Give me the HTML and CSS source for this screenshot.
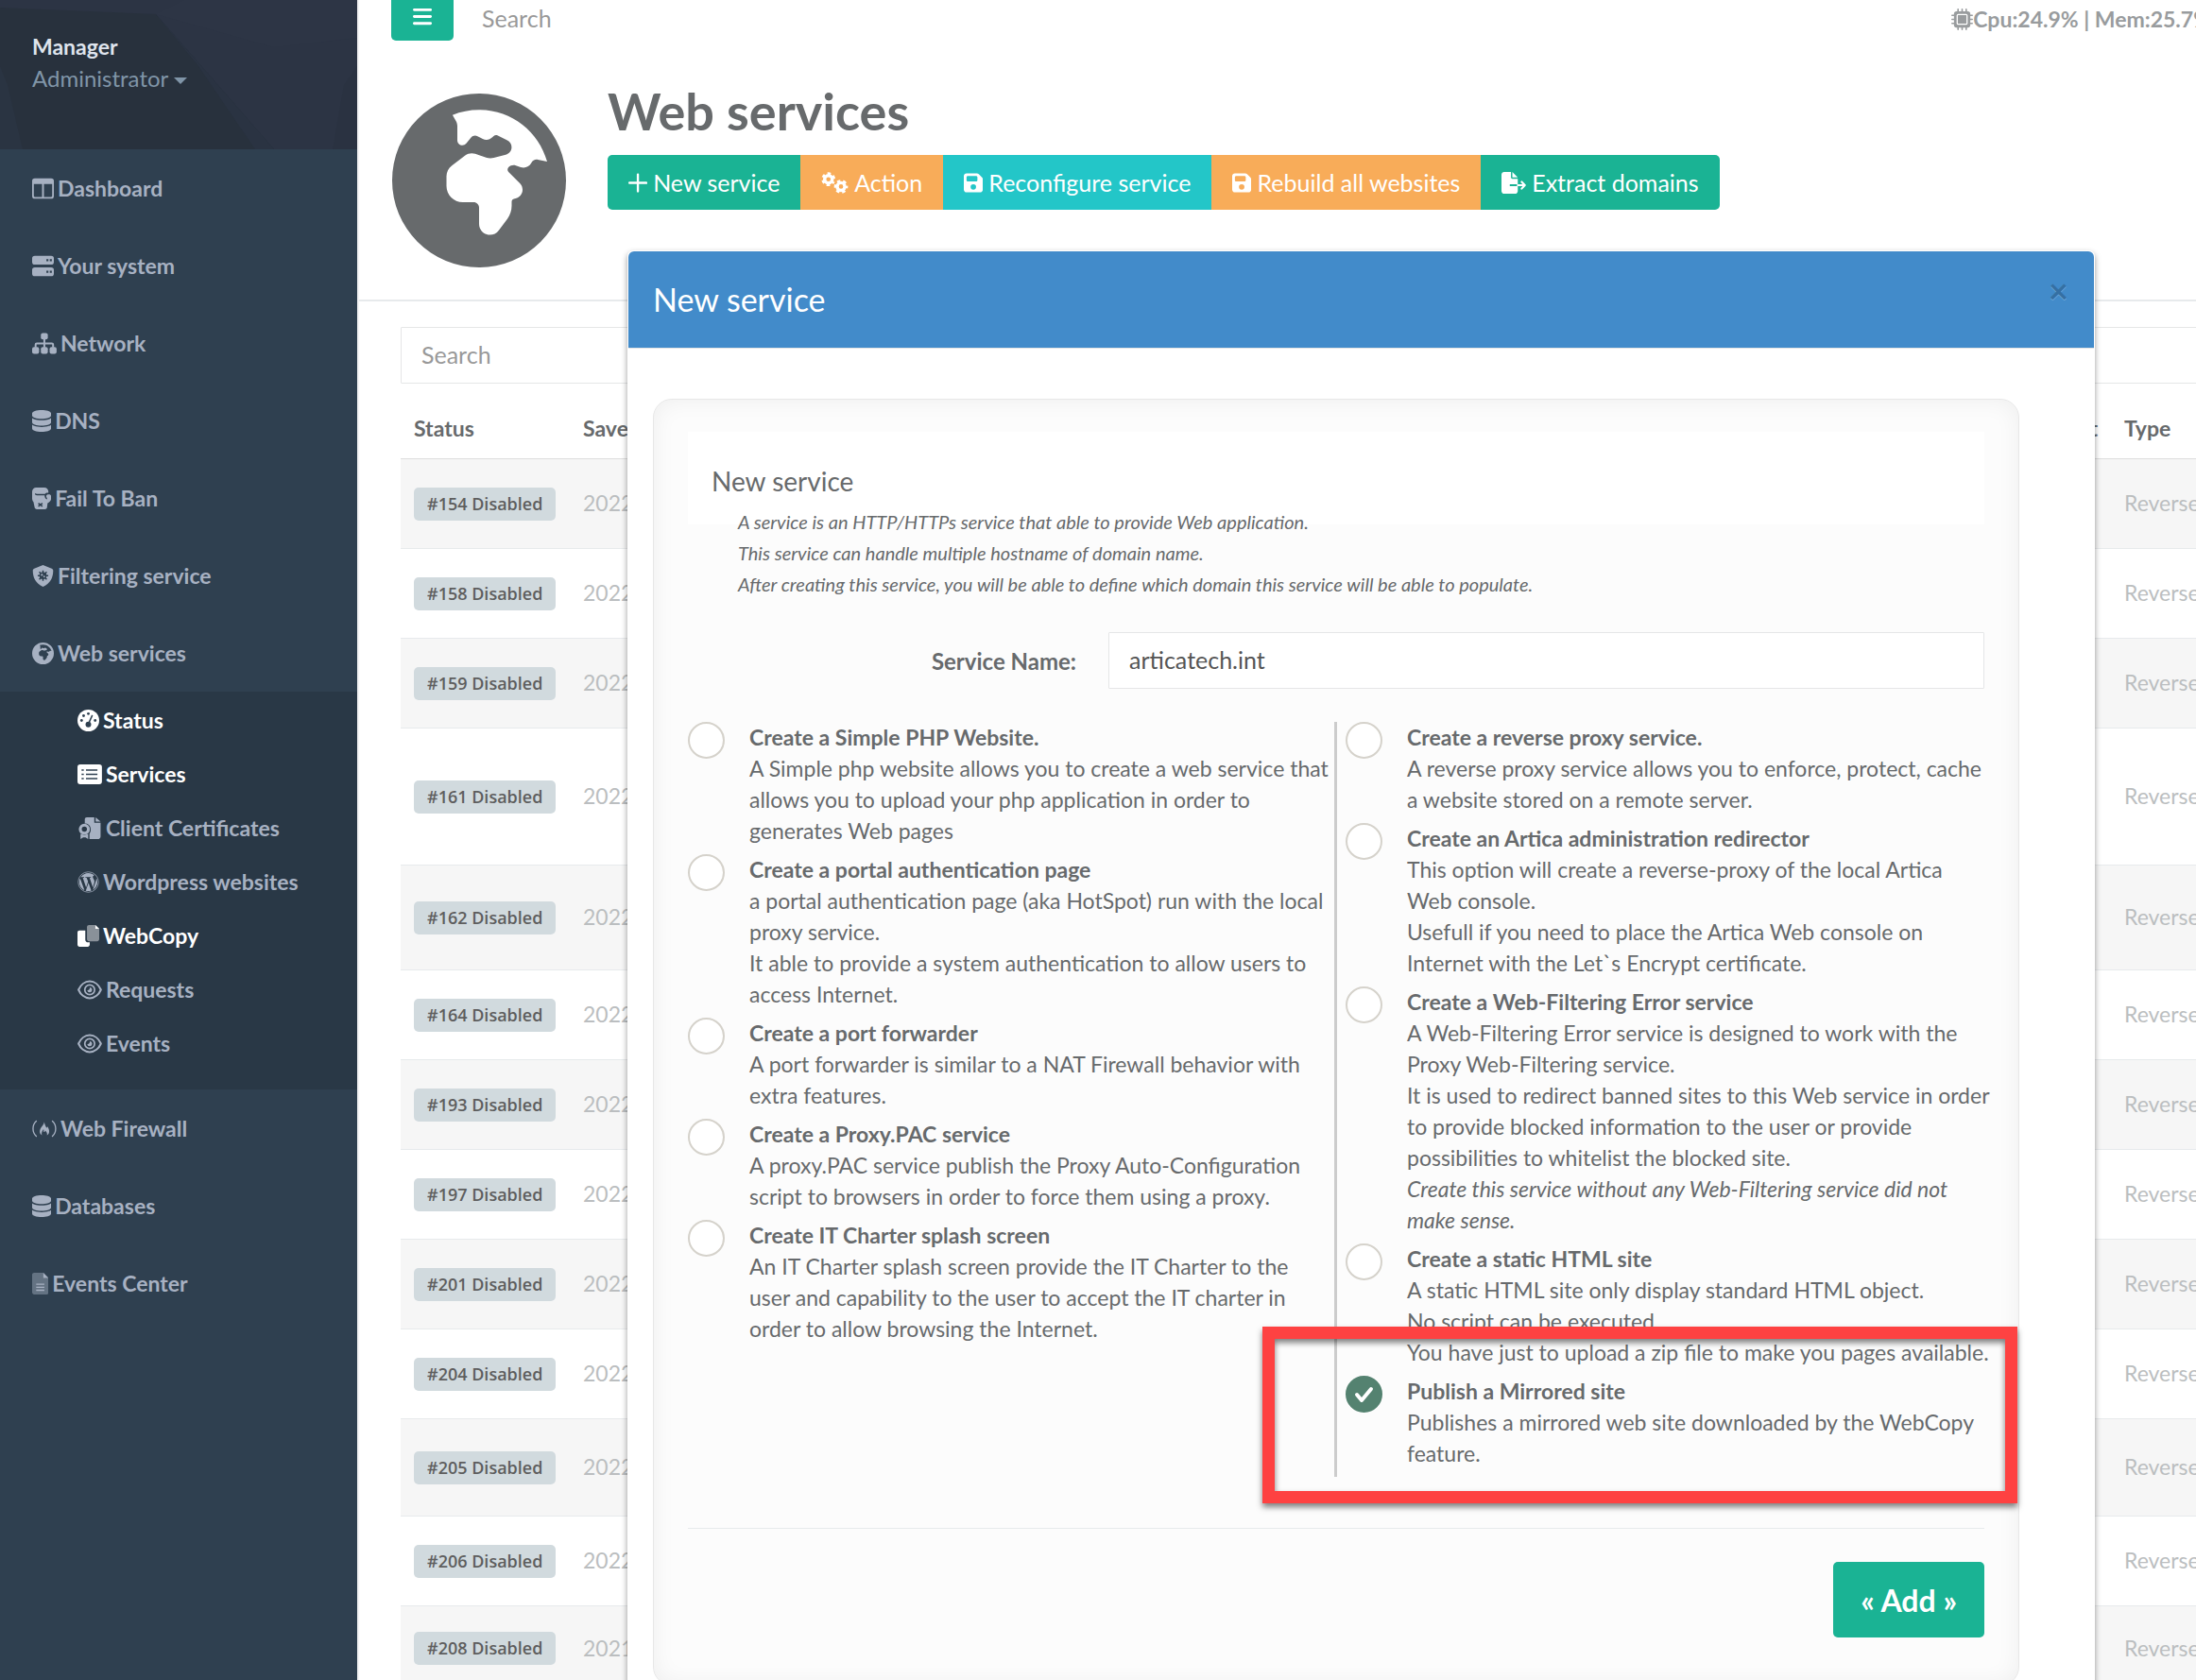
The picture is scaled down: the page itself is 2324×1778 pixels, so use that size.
FILE: index.html
```html
<!DOCTYPE html>
<html lang="en">
<head>
    <meta charset="UTF-8">
    <meta name="viewport" content="width=device-width, initial-scale=1.0">
    <title>Web services</title>
    <link rel="stylesheet" href="styles.css">
</head>
<body>

<!-- Shared icons -->
<svg class="sprite" aria-hidden="true">
    <symbol id="i-globe" viewBox="0 0 512 512"><path fill-rule="evenodd" d="M177.8 63.2l10 17.4c2.800 4.800 4.200 10.300 4.200 15.900v41.400c0 3.900 1.600 7.700 4.300 10.400c6.200 6.200 16.500 5.700 22-1.200l13.600-17c4.700-5.900 12.900-7.700 19.600-4.300l15.200 7.600c3.400 1.700 7.200 2.600 11 2.600c6.500 0 12.800-2.600 17.400-7.200l3.900-3.900c2.900-2.900 7.300-3.600 11-1.800l29.200 14.600c7.800 3.900 12.600 11.800 12.600 20.500c0 10.500-7.100 19.600-17.300 22.200l-35.400 8.800c-7.400 1.800-15.100 1.500-22.400-.9l-32-10.700c-3.300-1.100-6.700-1.700-10.200-1.700c-7 0-13.800 2.300-19.400 6.500L176 212c-10.100 7.600-16 19.400-16 32v28c0 26.500 21.500 48 48 48h32c8.800 0 16 7.200 16 16v48c0 17.700 14.300 32 32 32c10.100 0 19.600-4.700 25.600-12.800l25.600-34.100c8.300-11.100 12.800-24.600 12.800-38.400V318.600c0-3.900 2.600-7.300 6.400-8.200l5.300-1.300c11.900-3 20.300-13.700 20.300-26c0-7.100-2.800-13.900-7.800-18.900l-33.500-33.500c-3.700-3.700-3.700-9.700 0-13.400c5.700-5.700 14.100-7.700 21.800-5.100l14.100 4.700c12.300 4.100 25.700-1.500 31.500-13c3.500-7 11.200-10.800 18.900-9.200l27.400 5.500C432 112.400 351.500 48 256 48c-27.700 0-54 5.400-78.200 15.200zM0 256a256 256 0 1 1 512 0A256 256 0 1 1 0 256z"/></symbol>
    <symbol id="i-database" viewBox="0 0 448 512"><path d="M448 80v48c0 44-100 80-224 80S0 172 0 128V80C0 36 100 0 224 0s224 36 224 80zM393 215c21-8 40-17 55-28v101c0 44-100 80-224 80S0 332 0 288V187c15 11 34 20 55 28 45 16 105 25 169 25s124-9 169-25zM0 347c15 11 34 20 55 28 45 16 105 25 169 25s124-9 169-25c21-8 40-17 55-28v85c0 44-100 80-224 80S0 476 0 432z"/></symbol>
    <symbol id="i-eye" viewBox="0 0 576 512"><path fill="none" stroke="currentColor" stroke-width="46" stroke-linejoin="round" d="M24 256C70 148 170 56 288 56s218 92 264 200c-46 108-146 200-264 200S70 364 24 256z"/><circle cx="288" cy="256" r="116" fill="none" stroke="currentColor" stroke-width="38"/><path d="M290 200a58 58 0 1 1-60 66c30 8 60-10 60-66z"/></symbol>
    <symbol id="i-save" viewBox="0 0 448 512"><path fill-rule="evenodd" d="M64 32C29 32 0 61 0 96v320c0 35 29 64 64 64h320c35 0 64-29 64-64V173c0-17-7-33-19-45l-77-77c-12-12-28-19-45-19zm0 96c0-18 14-32 32-32h192c18 0 32 14 32 32v64c0 18-14 32-32 32H96c-18 0-32-14-32-32zm160 160a64 64 0 1 1 0 128 64 64 0 1 1 0-128z"/></symbol>
</svg>

<div class="wrapper">
    <nav class="sidebar">
        <div class="profile">
            <svg class="profile_pattern" viewBox="0 0 378 158" preserveAspectRatio="none" aria-hidden="true">
                <polygon points="0,0 378,0 378,158 290,158 165,15 0,8" fill="#2c3444"/>
                <polygon points="165,15 210,70 270,158 290,158" fill="#2a3342"/>
                <polygon points="165,15 290,50 378,40 378,0 195,0" fill="#2d3545"/>
                <polygon points="0,70 8,90 24,158 0,158" fill="#2a3442"/>
                <polygon points="378,70 364,90 352,158 378,158" fill="#2a3241"/>
            </svg>
            <div class="profile_name">Manager</div>
            <a class="profile_role" href="#">Administrator <span class="caret"></span></a>
        </div>
        <ul class="menu">
            <li><a href="#"><svg class="icon" viewBox="0 0 512 512"><path fill-rule="evenodd" d="M64 16h384a64 64 0 0 1 64 64v352a64 64 0 0 1-64 64H64a64 64 0 0 1-64-64V80a64 64 0 0 1 64-64zM40 150v280q0 24 24 24h170V150zm238 0v304h170q24 0 24-24V150z"/></svg>Dashboard</a></li>
            <li><a href="#"><svg class="icon" viewBox="0 0 512 512"><path fill-rule="evenodd" d="M64 16h384a64 64 0 0 1 64 64v80a64 64 0 0 1-64 64H64a64 64 0 0 1-64-64V80a64 64 0 0 1 64-64zM64 288h384a64 64 0 0 1 64 64v80a64 64 0 0 1-64 64H64a64 64 0 0 1-64-64v-80a64 64 0 0 1 64-64zM336 96v48h48V96zm80 0v48h48V96zm-80 272v48h48v-48zm80 0v48h48v-48z"/></svg>Your system</a></li>
            <li><a href="#"><svg class="icon" viewBox="0 0 576 512"><rect x="206" y="10" width="164" height="154" rx="46"/><rect x="0" y="340" width="164" height="162" rx="46"/><rect x="206" y="340" width="164" height="162" rx="46"/><rect x="412" y="340" width="164" height="162" rx="46"/><path fill="none" stroke="currentColor" stroke-width="44" d="M288 150v200M82 350v-66q0-28 28-28h356q28 0 28 28v66"/></svg>Network</a></li>
            <li><a href="#"><svg class="icon" viewBox="0 0 448 512"><use href="#i-database"/></svg>DNS</a></li>
            <li><a href="#"><svg class="icon" viewBox="0 0 448 512"><path d="M96 0h192c53 0 96 43 96 96l-4 30c-30-8-60 4-78 26H110L70 136v30l38 18h188c-4 46 16 88 60 96l-6-34c-30-20-22-84 24-84h26c28 0 48 20 48 48v48c0 40-34 88-84 108l-12 98c-2 30-20 48-52 48H112c-30 0-50-18-54-48L32 340C12 320 0 290 0 256V96C0 43 43 0 96 0z"/><path class="cut" d="M146 368l96 76m0-76l-96 76"/></svg>Fail To Ban</a></li>
            <li><a href="#"><svg class="icon" viewBox="0 0 512 512"><path d="M256 0l206 82c20 8 34 28 34 52-2 150-60 300-240 378C76 434 18 284 16 134c0-24 14-44 34-52z"/><path class="cut" d="M256 126v248M132 250h248M168 162l176 176M344 162L168 338"/><circle class="cut_fill" cx="256" cy="250" r="84"/><circle cx="230" cy="232" r="24"/><circle cx="284" cy="270" r="20"/></svg>Filtering service</a></li>
            <li>
                <a href="#"><svg class="icon" viewBox="0 0 512 512"><use href="#i-globe"/></svg>Web services</a>
                <ul class="submenu">
                    <li><a class="active" href="#"><svg class="icon" viewBox="0 0 512 512"><circle cx="256" cy="256" r="256"/><g class="cut_fill"><circle cx="96" cy="256" r="32"/><circle cx="144" cy="144" r="32"/><circle cx="256" cy="96" r="32"/><circle cx="416" cy="256" r="32"/><circle cx="256" cy="350" r="66"/></g><path class="cut" d="M256 340L350 130"/></svg>Status</a></li>
                    <li><a class="active" href="#"><svg class="icon" viewBox="0 0 576 512"><rect y="24" width="576" height="464" rx="64"/><path class="cut" d="M200 156h270M200 256h270M200 356h270M96 156h52M96 256h52M96 356h52"/></svg>Services</a></li>
                    <li><a href="#"><svg class="icon" viewBox="-32 0 576 512"><path d="M140 96V48c0-28 20-48 48-48h176v128h148v320c0 36-28 64-64 64H250V384c60-70 40-240-110-240zM396 0l116 100H396z"/><circle cx="130" cy="280" r="96" fill="none" stroke="currentColor" stroke-width="70"/><path d="M40 390l90 30 90-30v122l-62-38h-56l-62 38z"/></svg>Client Certificates</a></li>
                    <li><a href="#"><svg class="icon" viewBox="0 0 512 512"><path d="M61.700 169.400l101.500 278C92.200 413 43.300 340.200 43.300 256c0-30.900 6.600-60.100 18.400-86.600zm337.900 75.900c0-26.300-9.400-44.500-17.500-58.700-10.800-17.500-20.900-32.400-20.900-49.900 0-19.600 14.800-37.800 35.700-37.800.9 0 1.800.1 2.800.2-37.900-34.700-88.300-55.900-143.700-55.900-74.300 0-139.700 38.100-177.800 95.900 5 .2 9.700.3 13.700.3 22.200 0 56.700-2.700 56.700-2.700 11.500-.7 12.800 16.200 1.400 17.500 0 0-11.500 1.300-24.300 2l77.500 230.400L249.800 247l-33.100-90.800c-11.500-.7-22.300-2-22.300-2-11.500-.7-10.100-18.200 1.300-17.500 0 0 35.100 2.700 56 2.700 22.200 0 56.700-2.700 56.700-2.700 11.500-.7 12.800 16.200 1.400 17.500 0 0-11.500 1.300-24.300 2l76.900 228.700 21.200-70.900c9-29.400 16-50.500 16-68.700zm-139.900 29.300l-63.800 185.500c19.100 5.600 39.200 8.700 60.100 8.700 24.800 0 48.500-4.300 70.600-12.100-.6-.9-1.100-1.900-1.500-2.900l-65.400-179.200zm183-120.700c.9 6.800 1.400 14 1.400 21.900 0 21.600-4 45.800-16.200 76.200l-65 187.900C426.200 403 468.700 334.500 468.700 256c0-37-9.400-71.800-26-102.100z"/><circle cx="256" cy="256" r="240" fill="none" stroke="currentColor" stroke-width="16"/></svg>Wordpress websites</a></li>
                    <li><a class="active" href="#"><svg class="icon" viewBox="0 0 512 512"><path d="M48 128h136v216c0 36 28 64 64 64h40v56c0 28-20 48-48 48H48c-28 0-48-20-48-48V176c0-28 20-48 48-48z"/><path opacity=".45" d="M272 0h150l90 90v246c0 28-20 48-48 48H272c-28 0-48-20-48-48V48c0-28 20-48 48-48z"/><path d="M422 0l90 90h-90z"/></svg>WebCopy</a></li>
                    <li><a href="#"><svg class="icon" viewBox="0 0 576 512"><use href="#i-eye"/></svg>Requests</a></li>
                    <li><a href="#"><svg class="icon" viewBox="0 0 576 512"><use href="#i-eye"/></svg>Events</a></li>
                </ul>
            </li>
            <li><a href="#"><svg class="icon" viewBox="0 0 576 512"><path fill="none" stroke="currentColor" stroke-width="30" stroke-linecap="round" d="M98 76C-4 170-4 340 98 434M478 76c102 94 102 264 0 358"/><path d="M286 92c10 80 40 110 56 150l20-34c60 90 50 170-12 206 14-50-10-90-44-116-4 30-20 40-34 30 0-24 2-44-2-60-30 40-64 100-34 146-70-36-72-120-20-190 40-56 66-84 70-132z"/></svg>Web Firewall</a></li>
            <li><a href="#"><svg class="icon" viewBox="0 0 448 512"><use href="#i-database"/></svg>Databases</a></li>
            <li><a href="#"><svg class="icon" viewBox="0 0 384 512"><path opacity=".45" d="M48 0h216l120 120v344c0 28-20 48-48 48H48c-28 0-48-20-48-48V48C0 20 20 0 48 0z"/><path d="M264 0l120 120H264zM96 256h192v30H96zM96 328h192v30H96zM96 396h192v30H96z"/></svg>Events Center</a></li>
        </ul>
    </nav>

    <main class="page">
        <header class="topbar">
            <button class="toggle" type="button" aria-label="Toggle menu"><svg class="icon" viewBox="0 0 448 512"><path d="M0 96C0 78 14 64 32 64H416c18 0 32 14 32 32s-14 32-32 32H32C14 128 0 114 0 96zM0 256c0-18 14-32 32-32H416c18 0 32 14 32 32s-14 32-32 32H32c-18 0-32-14-32-32zM448 416c0 18-14 32-32 32H32c-18 0-32-14-32-32s14-32 32-32H416c18 0 32 14 32 32z"/></svg></button>
            <input class="topbar_search" type="text" placeholder="Search" aria-label="Search the console">
            <div class="usage"><svg class="icon" viewBox="0 0 512 512"><rect x="64" y="64" width="384" height="384" rx="60"/><path fill="none" stroke="currentColor" stroke-width="36" stroke-linecap="round" d="M160 18v476M256 18v476M352 18v476M18 160h476M18 256h476M18 352h476"/><rect x="140" y="140" width="232" height="232" rx="24" fill="none" stroke="#fff" stroke-width="28"/></svg>Cpu:24.9% | Mem:25.7%</div>
        </header>

        <section class="heading">
            <svg class="heading_icon" viewBox="0 0 512 512"><use href="#i-globe"/></svg>
            <div>
                <h1>Web services</h1>
                <div class="btn_group">
                    <button class="btn primary" type="button"><svg class="icon" viewBox="0 0 448 512"><path fill="none" stroke="currentColor" stroke-width="52" stroke-linecap="round" d="M224 58v396M26 256h396"/></svg>New service</button>
                    <button class="btn warning" type="button"><svg class="icon" viewBox="0 0 640 512"><g fill="none" stroke="currentColor"><circle cx="172" cy="172" r="90" stroke-width="76"/><circle cx="172" cy="172" r="136" stroke-width="56" stroke-dasharray="76 66.400" stroke-dashoffset="38" transform="rotate(30 172 172)"/><circle cx="468" cy="344" r="90" stroke-width="76"/><circle cx="468" cy="344" r="136" stroke-width="56" stroke-dasharray="76 66.400" stroke-dashoffset="38"/></g></svg>Action</button>
                    <button class="btn info" type="button"><svg class="icon" viewBox="0 0 448 512"><use href="#i-save"/></svg>Reconfigure service</button>
                    <button class="btn warning" type="button"><svg class="icon" viewBox="0 0 448 512"><use href="#i-save"/></svg>Rebuild all websites</button>
                    <button class="btn primary" type="button"><svg class="icon" viewBox="0 0 576 512"><path d="M64 0h160v128c0 18 14 32 32 32h128v128H216c-14 0-24 10-24 24s10 24 24 24h168v112c0 35-29 64-64 64H64c-35 0-64-29-64-64V64C0 29 29 0 64 0zM256 0l128 128H256z"/><path fill="none" stroke="currentColor" stroke-width="48" stroke-linecap="round" stroke-linejoin="round" d="M384 312h160M476 232l74 80-74 80"/></svg>Extract domains</button>
                </div>
            </div>
        </section>

        <section class="content">
            <input class="field" type="text" placeholder="Search" aria-label="Search services">
            <table>
                <thead>
                    <tr><th class="col_status">Status</th><th>Saved</th><th class="col_port">Port</th><th class="col_type">Type</th></tr>
                </thead>
                <tbody>
                    <tr><td><span class="badge">#154 Disabled</span></td><td>2022</td><td></td><td>Reverse proxy</td></tr>
                    <tr><td><span class="badge">#158 Disabled</span></td><td>2022</td><td></td><td>Reverse proxy</td></tr>
                    <tr><td><span class="badge">#159 Disabled</span></td><td>2022</td><td></td><td>Reverse proxy</td></tr>
                    <tr class="row_xl"><td><span class="badge">#161 Disabled</span></td><td>2022</td><td></td><td>Reverse proxy</td></tr>
                    <tr class="row_lg"><td><span class="badge">#162 Disabled</span></td><td>2022</td><td></td><td>Reverse proxy</td></tr>
                    <tr><td><span class="badge">#164 Disabled</span></td><td>2022</td><td></td><td>Reverse proxy</td></tr>
                    <tr><td><span class="badge">#193 Disabled</span></td><td>2022</td><td></td><td>Reverse proxy</td></tr>
                    <tr><td><span class="badge">#197 Disabled</span></td><td>2022</td><td></td><td>Reverse proxy</td></tr>
                    <tr><td><span class="badge">#201 Disabled</span></td><td>2022</td><td></td><td>Reverse proxy</td></tr>
                    <tr><td><span class="badge">#204 Disabled</span></td><td>2022</td><td></td><td>Reverse proxy</td></tr>
                    <tr class="row_md"><td><span class="badge">#205 Disabled</span></td><td>2022</td><td></td><td>Reverse proxy</td></tr>
                    <tr><td><span class="badge">#206 Disabled</span></td><td>2022</td><td></td><td>Reverse proxy</td></tr>
                    <tr class="row_sm"><td><span class="badge">#208 Disabled</span></td><td>2021</td><td></td><td>Reverse proxy</td></tr>
                </tbody>
            </table>
        </section>

        <div class="modal" role="dialog" aria-labelledby="modalTitle">
            <div class="modal_header">
                <h2 id="modalTitle">New service</h2>
                <button class="close" type="button" aria-label="Close">×</button>
            </div>
            <form class="panel">
                <h3>New service</h3>
                <p class="help">A service is an HTTP/HTTPs service that able to provide Web application.<br>This service can handle multiple hostname of domain name.<br>After creating this service, you will be able to define which domain this service will be able to populate.</p>
                <div class="form_row">
                    <label for="serviceName">Service Name:</label>
                    <input class="field" id="serviceName" type="text" value="articatech.int">
                </div>
                <div class="options">
                    <div class="options_col">
                        <div class="option">
                            <input type="radio" name="kind" id="kindPhp">
                            <label for="kindPhp"><b>Create a Simple PHP Website.</b><br>A Simple php website allows you to create a web service that allows you to upload your php application in order to generates Web pages</label>
                        </div>
                        <div class="option">
                            <input type="radio" name="kind" id="kindPortal">
                            <label for="kindPortal"><b>Create a portal authentication page</b><br>a portal authentication page (aka HotSpot) run with the local proxy service.<br>It able to provide a system authentication to allow users to access Internet.</label>
                        </div>
                        <div class="option">
                            <input type="radio" name="kind" id="kindForward">
                            <label for="kindForward"><b>Create a port forwarder</b><br>A port forwarder is similar to a NAT Firewall behavior with extra features.</label>
                        </div>
                        <div class="option">
                            <input type="radio" name="kind" id="kindPac">
                            <label for="kindPac"><b>Create a Proxy.PAC service</b><br>A proxy.PAC service publish the Proxy Auto-Configuration script to browsers in order to force them using a proxy.</label>
                        </div>
                        <div class="option">
                            <input type="radio" name="kind" id="kindCharter">
                            <label for="kindCharter"><b>Create IT Charter splash screen</b><br>An IT Charter splash screen provide the IT Charter to the user and capability to the user to accept the IT charter in order to allow browsing the Internet.</label>
                        </div>
                    </div>
                    <div class="options_col">
                        <div class="option">
                            <input type="radio" name="kind" id="kindReverse">
                            <label for="kindReverse"><b>Create a reverse proxy service.</b><br>A reverse proxy service allows you to enforce, protect, cache a website stored on a remote server.</label>
                        </div>
                        <div class="option">
                            <input type="radio" name="kind" id="kindAdmin">
                            <label for="kindAdmin"><b>Create an Artica administration redirector</b><br>This option will create a reverse-proxy of the local Artica Web console.<br>Usefull if you need to place the Artica Web console on Internet with the Let`s Encrypt certificate.</label>
                        </div>
                        <div class="option">
                            <input type="radio" name="kind" id="kindError">
                            <label for="kindError"><b>Create a Web-Filtering Error service</b><br>A Web-Filtering Error service is designed to work with the Proxy Web-Filtering service.<br>It is used to redirect banned sites to this Web service in order to provide blocked information to the user or provide possibilities to whitelist the blocked site.<br><i>Create this service without any Web-Filtering service did not make sense.</i></label>
                        </div>
                        <div class="option">
                            <input type="radio" name="kind" id="kindStatic">
                            <label for="kindStatic"><b>Create a static HTML site</b><br>A static HTML site only display standard HTML object.<br>No script can be executed<br>You have just to upload a zip file to make you pages available.</label>
                        </div>
                        <div class="option">
                            <input type="radio" name="kind" id="kindMirror" checked>
                            <label for="kindMirror"><b>Publish a Mirrored site</b><br>Publishes a mirrored web site downloaded by the WebCopy feature.</label>
                        </div>
                    </div>
                    <div class="highlight"></div>
                </div>
                <div class="actions">
                    <button class="btn primary add" type="button">« Add »</button>
                </div>
            </form>
        </div>
    </main>
</div>

</body>
</html>
```
FILE: styles.css
```css
* {
    box-sizing: border-box;
}

body {
    margin: 0;
    background: #2f4050;
    color: #676a6c;
    font-family: Lato, "Open Sans", sans-serif;
    font-size: 23px;
    line-height: 33px;
    overflow: hidden;
}

a {
    text-decoration: none;
}

button, input {
    font-family: inherit;
    font-size: 25px;
    color: inherit;
}

.sprite {
    display: none;
}

.icon {
    height: 23px;
    fill: currentColor;
    flex: none;
}

.wrapper {
    display: flex;
    height: 100vh;
}

/* Sidebar */
.sidebar {
    width: 378px;
    flex: none;
    background: #2f4050;
    color: #a7b1c2;
    font-weight: 700;
}

.profile {
    position: relative;
    height: 158px;
    padding: 33px 34px;
    background: #28313d;
}

.profile_pattern {
    position: absolute;
    inset: 0;
    width: 100%;
    height: 100%;
}

.profile_name, .profile_role {
    position: relative;
    display: block;
}

.profile_name {
    color: #dfe4ed;
}

.profile_role {
    color: #8095a8;
    font-size: 24px;
    font-weight: 400;
}

.caret {
    display: inline-block;
    vertical-align: middle;
    border: 7px solid transparent;
    border-top-color: currentColor;
    border-bottom: 0;
}

.menu, .submenu {
    margin: 0;
    padding: 0;
    list-style: none;
}

.menu a {
    display: flex;
    align-items: center;
    gap: 4px;
    height: 82px;
    padding-left: 34px;
    color: #a7b1c2;
}

.menu .submenu {
    padding: 2px 0 20px;
    background: #293846;
}

.menu .submenu a {
    height: 57px;
    padding-left: 82px;
}

.menu .submenu .active {
    color: #fff;
}

.cut {
    fill: none;
    stroke: #2f4050;
    stroke-width: 34;
}

.cut_fill {
    fill: #2f4050;
}

/* Page */
.page {
    position: relative;
    flex: 1;
    min-width: 0;
    border-left: 2px solid #f3f3f4;
    background: #fff;
    overflow: hidden;
}

.topbar {
    display: flex;
    align-items: flex-start;
    height: 73px;
    padding-left: 34px;
}

.toggle {
    display: flex;
    align-items: flex-start;
    justify-content: center;
    width: 66px;
    height: 43px;
    padding: 6px 0 0;
    border: 0;
    border-radius: 0 0 5px 5px;
    background: #1ab394;
    color: #fff;
}

.topbar_search {
    width: 400px;
    height: 38px;
    padding: 0 0 0 30px;
    border: 0;
}

::placeholder {
    color: #999;
    opacity: 1;
}

.usage {
    display: flex;
    align-items: center;
    height: 40px;
    margin: 0 -16px 0 auto;
    color: #999c9e;
    font-weight: 700;
    white-space: nowrap;
}

.heading {
    display: flex;
    gap: 44px;
    height: 246px;
    padding: 26px 34px 0 35px;
    border-bottom: 2px solid #e7eaec;
}

.heading_icon {
    width: 184px;
    height: 184px;
    fill: #676a6c;
}

h1, h2, h3 {
    margin: 0;
    font-weight: 400;
}

h1 {
    height: 65px;
    font-size: 54px;
    font-weight: 700;
    line-height: 38px;
}

.btn_group {
    display: flex;
    border-radius: 5px;
    overflow: hidden;
}

.btn {
    display: flex;
    align-items: center;
    gap: 6px;
    height: 58px;
    padding: 0 22px;
    border: 0;
    color: #fff;
    white-space: nowrap;
}

.primary {
    background: #1ab394;
}

.info {
    background: #23c6c8;
}

.warning {
    background: #f8ac59;
}

.content {
    margin: 27px -100px 0 44px;
}

.field {
    width: 100%;
    height: 60px;
    padding: 0 21px 2px;
    border: 1px solid #e5e6e7;
    border-radius: 1px;
    background: #fff;
}

table {
    width: 100%;
    table-layout: fixed;
    border-collapse: collapse;
}

th {
    height: 79px;
    padding: 16px 14px 0;
    font-weight: 700;
    text-align: left;
}

td {
    height: 95px;
    padding: 0 14px;
    border-top: 1px solid #e7eaec;
    color: #bbbec0;
}

tbody tr:first-child td {
    border-top-color: #ddd;
}

tbody tr:nth-child(odd) {
    background: #f6f6f6;
}

.row_sm td {
    height: 90px;
}

.row_md td {
    height: 103px;
}

.row_lg td {
    height: 111px;
}

.row_xl td {
    height: 145px;
}

.col_status {
    width: 179px;
}

.col_port {
    width: 150px;
    text-align: right;
}

.col_type {
    width: 190px;
}

.badge {
    display: inline-block;
    padding: 0 14px;
    border-radius: 5px;
    background: #d1dade;
    color: #5e5e5e;
    font-family: "Open Sans", sans-serif;
    font-size: 18px;
    font-weight: 600;
    line-height: 35px;
    white-space: nowrap;
}

/* Modal */
.modal {
    position: absolute;
    top: 265px;
    left: 284px;
    right: 107px;
    bottom: -40px;
    border: 1px solid #fff;
    border-radius: 6px 6px 0 0;
    background: #fff;
    box-shadow: 0 3px 6px rgba(0, 0, 0, 0.4);
}

.modal_header {
    display: flex;
    justify-content: space-between;
    height: 103px;
    padding: 0 27px 0 26px;
    border-bottom: 1px solid #e5e5e5;
    border-radius: 6px 6px 0 0;
    background: #428bca;
    color: #fff;
}

h2 {
    font-size: 34px;
    line-height: 102px;
}

.close {
    align-self: flex-start;
    padding: 0;
    border: 0;
    background: none;
    color: #3570a3;
    font-size: 36px;
    font-weight: 700;
    line-height: 82px;
    text-shadow: 0 1px 0 #6fa9dc;
}

.panel {
    margin: 53px 79px 0 26px;
    padding: 34px 36px 50px;
    border: 1px solid #e7e7e7;
    border-radius: 20px;
    background: #fcfcfc;
    box-shadow: inset 0 0 24px rgba(0, 0, 0, 0.06);
}

h3 {
    height: 98px;
    padding: 36px 25px 0;
    background: #fff;
    font-size: 28px;
}

.help {
    margin: -19px 0 34px;
    padding-left: 53px;
    font-size: 20px;
    font-style: italic;
}

.form_row {
    display: flex;
    align-items: center;
    gap: 34px;
}

.form_row label {
    flex: 1;
    font-size: 24px;
    font-weight: 700;
    text-align: right;
}

.form_row .field {
    flex: 0 0 927px;
    color: #555;
}

/* The right column runs a little past the form row */
.options {
    position: relative;
    display: flex;
    margin: 35px -8px 0 0;
}

.options_col {
    flex: 1;
}

.options_col:first-child {
    flex: 0 0 687px;
    padding-right: 4px;
    border-right: 3px solid #ccc;
}

.options_col:nth-child(2) {
    padding-left: 9px;
}

.option {
    display: flex;
    gap: 26px;
    padding-bottom: 8px;
}

.option input {
    appearance: none;
    flex: none;
    width: 39px;
    height: 39px;
    margin: 0;
    border: 2px solid #d5d2cb;
    border-radius: 50%;
    background: #fff;
}

.option input:checked {
    border-color: #548270;
    background: #548270 url("data:image/svg+xml,%3Csvg xmlns='http://www.w3.org/2000/svg' viewBox='0 0 35 35'%3E%3Cpath d='M10 18l5 6 10-12' fill='none' stroke='white' stroke-width='4' stroke-linecap='round' stroke-linejoin='round'/%3E%3C/svg%3E");
}

.option b {
    font-weight: 700;
}

.highlight {
    position: absolute;
    right: -27px;
    bottom: -28px;
    width: 799px;
    height: 187px;
    border: 13px solid #fe4242;
    filter: drop-shadow(0 4px 3px rgba(0, 0, 0, 0.5));
    pointer-events: none;
}

.actions {
    display: flex;
    justify-content: flex-end;
    margin-top: 54px;
    padding-top: 35px;
    border-top: 1px solid #e7eaec;
}

.add {
    height: 80px;
    padding: 0 29px;
    border-radius: 5px;
    font-size: 32px;
    font-weight: 700;
}
```
